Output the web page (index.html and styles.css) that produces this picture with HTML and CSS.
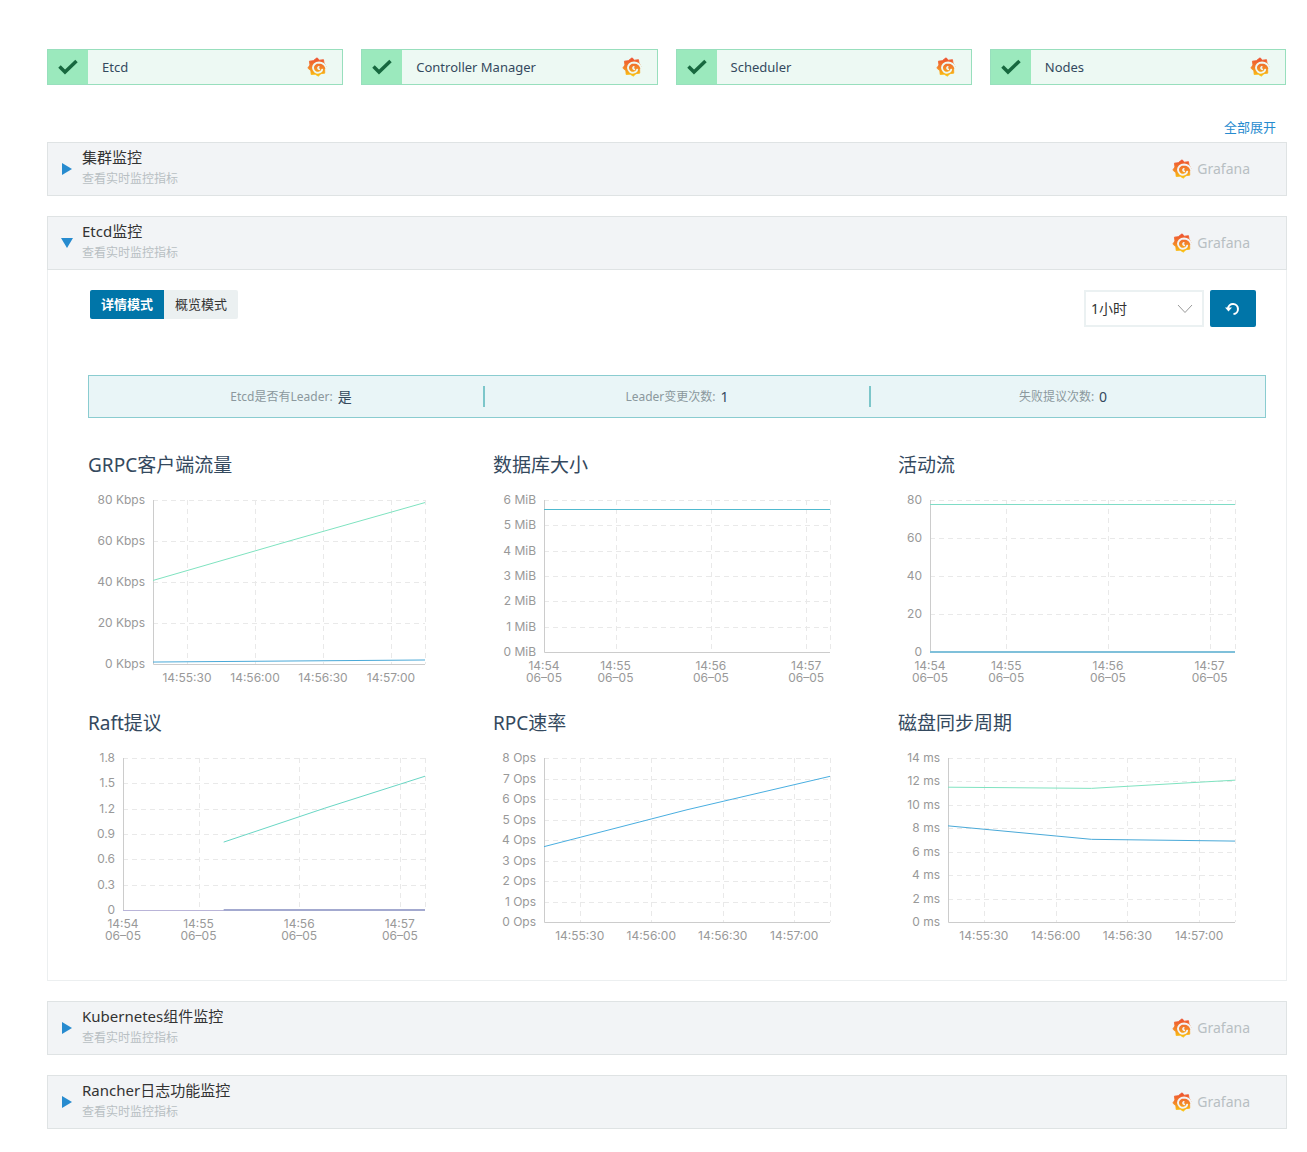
FILE: index.html
```
<!DOCTYPE html>
<html lang="zh-CN">

<head>
    <meta charset="UTF-8">
    <meta name="viewport" content="width=device-width, initial-scale=1.0">
    <title>集群监控</title>
    <link rel="stylesheet" href="styles.css">
</head>

<body>
    <!-- shared icons -->
    <svg class="sprite" width="0" height="0" aria-hidden="true">
        <defs>
            <linearGradient id="grafana-fill" x1="0" y1="0" x2="0" y2="1">
                <stop offset="0" stop-color="#ee4f2e" />
                <stop offset="0.5" stop-color="#f2802b" />
                <stop offset="1" stop-color="#fbc50d" />
            </linearGradient>
            <mask id="grafana-swirl" maskUnits="userSpaceOnUse" x="0" y="0" width="24" height="24">
                <rect width="24" height="24" fill="#fff" />
                <path d="M24 15.500C22.500 9.500 19 6.800 14.500 6.600C9.800 6.600 7 9.800 7.200 13.200C7.600 17 10.800 19.200 14 18.800C16.200 18.400 17.800 17 18.200 15.200" fill="none" stroke="#000" stroke-width="2.300" stroke-linecap="round" />
                <path d="M14.800 14.800C12.800 14.600 12.600 12.400 14.200 11.800" fill="none" stroke="#000" stroke-width="2" stroke-linecap="round" />
            </mask>
        </defs>
        <symbol id="icon-grafana" viewBox="0 0 24 24">
            <path mask="url(#grafana-swirl)" fill="url(#grafana-fill)" stroke="url(#grafana-fill)" stroke-width="1" stroke-linejoin="round" d="M12 1L15 3.800L19.800 3.200L20.400 7.300L23 11.500L21.200 15L21.300 19.400L16.800 20L13.500 23L9.900 20.600L5 21L4.600 16.500L1 13.300L3.500 9.600L2.900 5L7.500 4.400Z" />
        </symbol>
        <symbol id="icon-check" viewBox="0 0 20 16">
            <path d="M1.500 7.500L7 13L18.500 2" fill="none" stroke="#17683f" stroke-width="3.500" />
        </symbol>
        <symbol id="icon-right" viewBox="0 0 12 12">
            <path d="M1 0L11 6L1 12Z" fill="#278bcf" />
        </symbol>
        <symbol id="icon-down" viewBox="0 0 12 12">
            <path d="M0 1L12 1L6 11Z" fill="#278bcf" />
        </symbol>
    </svg>

    <div class="components">
        <div class="component">
            <span class="component-state"><svg width="20" height="16"><use href="#icon-check" /></svg></span>
            <span class="component-name">Etcd</span>
            <a class="component-link" href="#" aria-label="Grafana"><svg width="20" height="20"><use href="#icon-grafana" /></svg></a>
        </div>
        <div class="component">
            <span class="component-state"><svg width="20" height="16"><use href="#icon-check" /></svg></span>
            <span class="component-name">Controller Manager</span>
            <a class="component-link" href="#" aria-label="Grafana"><svg width="20" height="20"><use href="#icon-grafana" /></svg></a>
        </div>
        <div class="component">
            <span class="component-state"><svg width="20" height="16"><use href="#icon-check" /></svg></span>
            <span class="component-name">Scheduler</span>
            <a class="component-link" href="#" aria-label="Grafana"><svg width="20" height="20"><use href="#icon-grafana" /></svg></a>
        </div>
        <div class="component">
            <span class="component-state"><svg width="20" height="16"><use href="#icon-check" /></svg></span>
            <span class="component-name">Nodes</span>
            <a class="component-link" href="#" aria-label="Grafana"><svg width="20" height="20"><use href="#icon-grafana" /></svg></a>
        </div>
    </div>

    <div class="expand-all"><a href="#">全部展开</a></div>

    <div class="panels">
        <section class="panel">
            <div class="panel-header">
                <button class="panel-toggle">
                    <svg width="12" height="12"><use href="#icon-right" /></svg>
                    <span>
                        <span class="panel-title">集群监控</span>
                        <span class="panel-subtitle">查看实时监控指标</span>
                    </span>
                </button>
                <a class="grafana" href="#"><svg width="20" height="20"><use href="#icon-grafana" /></svg>Grafana</a>
            </div>
        </section>

        <section class="panel">
            <div class="panel-header">
                <button class="panel-toggle">
                    <svg width="12" height="12"><use href="#icon-down" /></svg>
                    <span>
                        <span class="panel-title">Etcd监控</span>
                        <span class="panel-subtitle">查看实时监控指标</span>
                    </span>
                </button>
                <a class="grafana" href="#"><svg width="20" height="20"><use href="#icon-grafana" /></svg>Grafana</a>
            </div>
            <div class="panel-body">
                <div class="toolbar">
                    <div class="modes">
                        <button class="mode active">详情模式</button>
                        <button class="mode">概览模式</button>
                    </div>
                    <div class="range">
                        <div class="select">
                            <select aria-label="时间范围">
                                <option>1小时</option>
                            </select>
                            <svg width="16" height="10" viewBox="0 0 16 10"><path d="M1 1L8 8.500L15 1" fill="none" stroke="#999" /></svg>
                        </div>
                        <button class="refresh" aria-label="刷新">
                            <svg width="16" height="14" viewBox="0 0 16 14">
                                <path d="M3 6.500A5 5 0 1 1 8.500 12" fill="none" stroke="#fff" stroke-width="2" />
                                <path d="M0 5.500H7L3.500 9.500Z" fill="#fff" />
                            </svg>
                        </button>
                    </div>
                </div>

                <div class="stats">
                    <div class="stat">Etcd是否有Leader: <span class="stat-value">是</span></div>
                    <div class="stat">Leader变更次数: <span class="stat-value">1</span></div>
                    <div class="stat">失败提议次数: <span class="stat-value">0</span></div>
                </div>

                <div class="charts" id="charts"></div>
            </div>
        </section>

        <section class="panel">
            <div class="panel-header">
                <button class="panel-toggle">
                    <svg width="12" height="12"><use href="#icon-right" /></svg>
                    <span>
                        <span class="panel-title">Kubernetes组件监控</span>
                        <span class="panel-subtitle">查看实时监控指标</span>
                    </span>
                </button>
                <a class="grafana" href="#"><svg width="20" height="20"><use href="#icon-grafana" /></svg>Grafana</a>
            </div>
        </section>

        <section class="panel">
            <div class="panel-header">
                <button class="panel-toggle">
                    <svg width="12" height="12"><use href="#icon-right" /></svg>
                    <span>
                        <span class="panel-title">Rancher日志功能监控</span>
                        <span class="panel-subtitle">查看实时监控指标</span>
                    </span>
                </button>
                <a class="grafana" href="#"><svg width="20" height="20"><use href="#icon-grafana" /></svg>Grafana</a>
            </div>
        </section>
    </div>

    <script>
        // times are seconds after 14:54:00
        const END = 195;
        const RIGHT = 337;
        const TOP = 21;

        const secondTicks = [[90, '14:55:30'], [120, '14:56:00'], [150, '14:56:30'], [180, '14:57:00']];
        const minuteTicks = [[15, '14:54'], [60, '14:55'], [120, '14:56'], [180, '14:57']];

        const charts = [
            {
                title: 'GRPC客户端流量', left: 65, max: 80, step: 20, unit: ' Kbps', start: 75,
                series: [
                    { color: '#7fe3c0', points: [[75, 41], [135, 60.2], [195, 79]] },
                    { color: '#49a9d8', points: [[75, 1.2], [135, 1.7], [195, 2.2]] }
                ]
            },
            {
                title: '数据库大小', left: 51, max: 6, step: 1, unit: ' MiB', start: 15,
                series: [{ color: '#4fb9cf', points: [[15, 5.65], [195, 5.65]] }]
            },
            {
                title: '活动流', left: 32, max: 80, step: 20, unit: '', start: 15,
                series: [
                    { color: '#7fdcc6', points: [[15, 78], [195, 78]] },
                    { color: '#7fc0da', width: 2, points: [[15, 0], [195, 0]] }
                ]
            },
            {
                title: 'Raft提议', left: 35, max: 1.8, step: 0.3, unit: '', start: 15,
                series: [
                    { color: '#69d6c4', points: [[75, 0.81], [135, 1.21], [195, 1.59]] },
                    { color: '#b9b4d8', points: [[15, 0], [195, 0]] },
                    { color: '#a3a9cf', width: 2, points: [[75, 0], [195, 0]] }
                ]
            },
            {
                title: 'RPC速率', left: 51, max: 8, step: 1, unit: ' Ops', start: 75,
                series: [{ color: '#49aee0', points: [[75, 3.7], [135, 5.5], [195, 7.13]] }]
            },
            {
                title: '磁盘同步周期', left: 50, max: 14, step: 2, unit: ' ms', start: 75,
                series: [
                    { color: '#7fe3c0', points: [[75, 11.55], [135, 11.45], [195, 12.15]] },
                    { color: '#49a9d8', points: [[75, 8.25], [135, 7.1], [195, 6.95]] }
                ]
            }
        ];

        function drawChart(chart) {
            const long = chart.start === 15;
            const bottom = long ? 173 : 185;
            const x = t => chart.left + (t - chart.start) / (END - chart.start) * (RIGHT - chart.left);
            const y = v => bottom - v / chart.max * (bottom - TOP);
            const crisp = n => Math.round(n) + 0.5;
            let svg = '';

            for (let i = 0; i <= Math.round(chart.max / chart.step); i++) {
                const value = i * chart.step;
                const label = i === 0 ? '0' : String(Math.round(value * 10) / 10);
                if (i > 0) {
                    svg += `<line class="grid" x1="${chart.left}" x2="${RIGHT}" y1="${crisp(y(value))}" y2="${crisp(y(value))}" />`;
                }
                svg += `<text class="tick" text-anchor="end" x="${chart.left - 8}" y="${Math.round(y(value)) + 4}">${label}${chart.unit}</text>`;
            }

            (long ? minuteTicks : secondTicks).forEach(([t, label]) => {
                const tx = x(t);
                if (t > chart.start) {
                    svg += `<line class="grid" x1="${crisp(tx)}" x2="${crisp(tx)}" y1="${TOP}" y2="${bottom}" />`;
                }
                const date = long ? `<tspan x="${tx}" dy="12">06–05</tspan>` : '';
                svg += `<text class="tick" text-anchor="middle" x="${tx}" y="${bottom + 18}">${label}${date}</text>`;
            });

            svg += `<line class="grid" x1="${RIGHT + 0.5}" x2="${RIGHT + 0.5}" y1="${TOP}" y2="${bottom}" />`;
            svg += `<path class="axis" d="M${chart.left + 0.5} ${TOP}V${bottom + 0.5}H${RIGHT}" />`;
            chart.series.forEach(s => {
                const flat = s.points.every(p => p[1] === s.points[0][1]);
                const width = s.width || 1;
                const py = v => flat ? Math.round(y(v)) + (width % 2) / 2 : y(v) + 0.5;
                const points = s.points.map(([t, v]) => `${x(t)},${py(v)}`).join(' ');
                svg += `<polyline class="series" stroke="${s.color}" stroke-width="${width}" points="${points}" />`;
            });

            return `<div class="chart"><h3 class="chart-title">${chart.title}</h3><svg viewBox="0 0 348 210" role="img" aria-label="${chart.title}">${svg}</svg></div>`;
        }

        document.getElementById('charts').innerHTML = charts.map(drawChart).join('');
    </script>
</body>

</html>
```
FILE: styles.css
```
* {
    box-sizing: border-box;
}

body {
    margin: 0;
    padding: 49px 20px 23px 47px;
    background: #fff;
    color: #333;
    font-family: "Noto Sans", "Noto Sans CJK SC", sans-serif;
    font-size: 13px;
}

a {
    color: #278bcf;
    text-decoration: none;
}

button,
select {
    font-family: inherit;
    cursor: pointer;
}

svg {
    display: block;
    flex: none;
}

.sprite {
    position: absolute;
}

/* component status */
.components {
    display: grid;
    grid-template-columns: repeat(4, 1fr);
    gap: 18px;
    padding-right: 1px;
}

.component {
    display: flex;
    align-items: center;
    height: 36px;
    padding-right: 15px;
    border: 1px solid #98dfbd;
    background: #edf9f3;
    color: #34495e;
}

.component-state {
    display: flex;
    align-items: center;
    justify-content: center;
    align-self: stretch;
    width: 40px;
    background: #9be9bd;
}

.component-name {
    flex: 1;
    padding-left: 14px;
}

.expand-all {
    margin: 32px 11px 5px 0;
    line-height: 20px;
    text-align: right;
}

/* panels */
.panels {
    display: flex;
    flex-direction: column;
    gap: 20px;
}

.panel {
    border: 1px solid #eceff0;
}

.panel-header {
    display: flex;
    align-items: center;
    justify-content: space-between;
    margin: -1px;
    padding-right: 36px;
    border: 1px solid #dfe3e4;
    background: #f2f4f6;
}

.panel-toggle {
    display: flex;
    align-items: center;
    gap: 9px;
    flex: 1;
    padding: 3px 0 5px 13px;
    border: none;
    background: none;
    text-align: left;
}

.panel-toggle svg {
    margin-top: 2px;
}

.panel-title,
.panel-subtitle {
    display: block;
    line-height: 22px;
}

.panel-title {
    color: #333;
    font-size: 15px;
}

.panel-subtitle {
    color: #b8bfc3;
    font-size: 12px;
}

.grafana {
    display: flex;
    align-items: center;
    gap: 5px;
    color: #b8bfc3;
    font-size: 14px;
    line-height: 20px;
}

.panel-body {
    padding: 21px 20px 33px 40px;
}

.toolbar {
    display: flex;
    align-items: flex-start;
    justify-content: space-between;
    padding: 0 10px 0 2px;
}

.modes,
.range {
    display: flex;
}

.range {
    gap: 6px;
}

.mode {
    width: 74px;
    height: 29px;
    padding: 0 0 2px;
    border: none;
    border-radius: 0 2px 2px 0;
    background: #ebf0f1;
    color: #333;
    font-size: 13px;
}

.mode.active {
    border-radius: 2px 0 0 2px;
    background: #0075a8;
    color: #fff;
    font-weight: bold;
}

.select {
    position: relative;
}

.select select {
    width: 120px;
    height: 37px;
    padding: 0 5px;
    border: 2px solid #ebf1f2;
    border-radius: 0;
    background: #fff;
    color: #333;
    font-size: 14px;
    appearance: none;
}

.select svg {
    position: absolute;
    top: 14px;
    right: 11px;
    pointer-events: none;
}

.refresh {
    display: flex;
    align-items: center;
    justify-content: center;
    width: 46px;
    height: 37px;
    padding: 0;
    border: none;
    border-radius: 2px;
    background: #0075a8;
}

.stats {
    display: flex;
    margin-top: 48px;
    padding: 10px;
    border: 1px solid #8accd0;
    background: #e9f5f7;
}

.stat {
    display: flex;
    align-items: center;
    justify-content: center;
    gap: 5px;
    flex: 1;
    color: #8b989d;
    font-size: 12px;
    line-height: 21px;
}

.stat + .stat {
    border-left: 2px solid #7cc6ca;
}

.stat-value {
    color: #34495e;
    font-size: 14px;
}

/* charts */
.charts {
    display: grid;
    grid-template-columns: repeat(3, 1fr);
    gap: 20px 57px;
    margin-top: 33px;
    padding-right: 20px;
}

.chart-title {
    margin: 0;
    color: #34495e;
    font-size: 19px;
    font-weight: normal;
    line-height: 28px;
}

.chart svg {
    width: 100%;
}

.tick {
    fill: #999;
    font-family: Inter, sans-serif;
    font-size: 12px;
}

.grid {
    stroke: #e9e9e9;
    stroke-dasharray: 5 4;
}

.axis {
    fill: none;
    stroke: #ccc;
}

.series {
    fill: none;
}
```
